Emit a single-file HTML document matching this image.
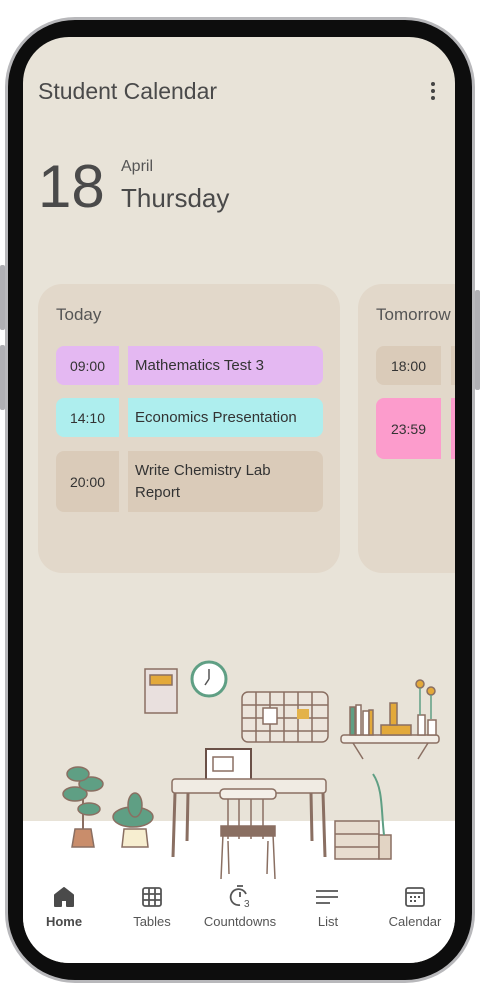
<!DOCTYPE html>
<html><head><meta charset="utf-8"><style>
*{margin:0;padding:0;box-sizing:border-box}
body{width:480px;height:1000px;background:#fff;position:relative;overflow:hidden;font-family:"Liberation Sans",Roboto,sans-serif;color:#444}
.frame{position:absolute;left:5px;top:17px;width:470px;height:966px;border-radius:70px;background:#b8b8bb;}
.bezel{position:absolute;left:8px;top:20px;width:464px;height:960px;border-radius:67px;background:#0d0d0d;}
.screen{position:absolute;left:23px;top:37px;width:432px;height:926px;border-radius:46px;background:#e8e3d8;overflow:hidden}
.btn{position:absolute;background:#b0b0b4;width:5px;border-radius:2px}
.t{position:absolute;white-space:nowrap}
.card{position:absolute;top:247px;height:289px;border-radius:24px;background:#e2d8ca}
.box{position:absolute;border-radius:0;font-size:14px;display:flex;align-items:center;color:#333}
.tm{justify-content:center;border-radius:8px 0 0 8px}
.ti{padding-left:7px;font-size:15px;border-radius:0 8px 8px 0;line-height:22px}
.nav{position:absolute;top:877px;font-size:13px;color:#555;text-align:center;width:80px}
</style></head><body>
<div class="btn" style="left:0;top:265px;height:65px"></div>
<div class="btn" style="left:0;top:345px;height:65px"></div>
<div class="btn" style="left:475px;top:290px;height:100px"></div>
<div class="frame"></div>
<div class="bezel"></div>
<div class="screen">
 <div class="t" style="left:15px;top:41px;font-size:23px;color:#4a4a4a">Student Calendar</div>
 <div class="t" style="left:408px;top:45px;width:4px"><div style="width:4px;height:4px;border-radius:2px;background:#444;margin-bottom:3px"></div><div style="width:4px;height:4px;border-radius:2px;background:#444;margin-bottom:3px"></div><div style="width:4px;height:4px;border-radius:2px;background:#444"></div></div>
 <div class="t" style="left:15px;top:115px;font-size:60px;color:#4a4a4a;line-height:70px">18</div>
 <div class="t" style="left:98px;top:121px;font-size:16px;color:#555">April</div>
 <div class="t" style="left:98px;top:146px;font-size:26px;color:#4a4a4a">Thursday</div>

 <div class="card" style="left:15px;width:302px">
  <div class="t" style="left:18px;top:21px;font-size:17px;color:#555">Today</div>
  <div class="box tm" style="left:18px;top:62px;width:63px;height:39px;background:#e4b8f2">09:00</div>
  <div class="box ti" style="left:90px;top:62px;width:195px;height:39px;background:#e4b8f2">Mathematics Test 3</div>
  <div class="box tm" style="left:18px;top:114px;width:63px;height:39px;background:#aeeeee">14:10</div>
  <div class="box ti" style="left:90px;top:114px;width:195px;height:39px;background:#aeeeee">Economics Presentation</div>
  <div class="box tm" style="left:18px;top:167px;width:63px;height:61px;background:#dacbb9">20:00</div>
  <div class="box ti" style="left:90px;top:167px;width:195px;height:61px;background:#dacbb9">Write Chemistry Lab<br>Report</div>
 </div>
 <div class="card" style="left:335px;width:200px">
  <div class="t" style="left:18px;top:21px;font-size:17px;color:#555">Tomorrow</div>
  <div class="box tm" style="left:18px;top:62px;width:65px;height:39px;background:#dacbb9">18:00</div>
  <div class="box ti" style="left:93px;top:62px;width:100px;height:39px;background:#dacbb9"></div>
  <div class="box tm" style="left:18px;top:114px;width:65px;height:61px;background:#fc9ccc">23:59</div>
  <div class="box ti" style="left:93px;top:114px;width:100px;height:61px;background:#fc9ccc"></div>
 </div>

 <div style="position:absolute;left:0;top:784px;width:432px;height:142px;background:#fff"></div>
 <svg style="position:absolute;left:0;top:592px" width="432" height="260" viewBox="0 0 432 260">
  <g stroke="#8a6f62" stroke-width="1.5" fill="none">
   <rect x="122" y="40" width="32" height="44" fill="#e9e0de"/>
   <rect x="127" y="46" width="22" height="10" fill="#e3a93a"/>
   <circle cx="186" cy="50" r="17" fill="#fff" stroke="#5f9f84" stroke-width="3"/>
   <path d="M186 50 L186 40 M186 50 L182 56" stroke="#555"/>
   <rect x="219" y="63" width="86" height="50" rx="6" fill="#ece5dc"/>
   <path d="M219 76h86M219 89h86M219 102h86M233 63v50M247 63v50M261 63v50M275 63v50M289 63v50"/>
   <rect x="240" y="79" width="14" height="16" fill="#fff"/>
   <rect x="274" y="80" width="12" height="10" fill="#e3b24a" stroke="none"/>
   <rect x="318" y="106" width="98" height="8" rx="3" fill="#f2ede6"/>
   <path d="M330 114 l10 16 M405 114 l-10 16"/>
   <rect x="327" y="78" width="5" height="28" fill="#5f9f84"/>
   <rect x="333" y="76" width="5" height="30" fill="#fff"/>
   <rect x="340" y="82" width="6" height="24" fill="#fff"/>
   <rect x="346" y="81" width="4" height="25" fill="#e3a93a"/>
   <rect x="358" y="96" width="30" height="10" fill="#e3a93a"/>
   <rect x="367" y="74" width="7" height="22" fill="#e3a93a"/>
   <rect x="395" y="86" width="7" height="20" fill="#fff"/>
   <rect x="405" y="91" width="8" height="15" fill="#fff"/>
   <circle cx="397" cy="55" r="4" fill="#e3a93a"/><circle cx="408" cy="62" r="4" fill="#e3a93a"/>
   <path d="M397 59 V86 M408 66 V90" stroke="#5f9f84"/>
   <rect x="183" y="120" width="45" height="33" fill="#fff" stroke="#6a5047" stroke-width="2"/>
   <rect x="190" y="128" width="20" height="14" fill="#fff"/>
   <path d="M170 155 h62"/>
   <rect x="149" y="150" width="154" height="14" rx="3" fill="#f0ebe3"/>
   <path d="M152 164 L150 228 M300 164 L302 228 M165 164 L164 212 M288 164 L289 212" stroke-width="3"/>
   <rect x="197" y="160" width="56" height="10" rx="4" fill="#f4efe8"/>
   <path d="M205 170 v40 M216 170 v40 M228 170 v40 M240 170 v40 M200 198 h50 M200 205 L198 250 M250 205 L252 250 M205 212 L206 245 M245 212 L244 245"/>
   <rect x="198" y="197" width="54" height="10" fill="#8a6f62"/>
   <rect x="312" y="192" width="44" height="38" fill="#e8ddd0"/>
   <path d="M312 205 h44 M312 218 h44"/>
   <rect x="356" y="206" width="12" height="24" fill="#e2d4c4"/>
   <path d="M361 206 C358 180 360 160 350 145" stroke="#5f9f84" stroke-width="2"/>
   <path d="M49 218 h22 l-3 -18 h-16 z" fill="#c98d6b"/>
   <path d="M60 200 V145" stroke-width="2"/>
   <ellipse cx="52" cy="165" rx="12" ry="7" fill="#5f9f84"/>
   <ellipse cx="68" cy="155" rx="12" ry="7" fill="#5f9f84"/>
   <ellipse cx="55" cy="145" rx="11" ry="7" fill="#5f9f84"/>
   <ellipse cx="66" cy="180" rx="11" ry="6" fill="#5f9f84"/>
   <path d="M99 218 h26 l-2 -18 h-22 z" fill="#f7eed0"/>
   <ellipse cx="110" cy="188" rx="20" ry="10" fill="#5f9f84"/>
   <ellipse cx="112" cy="176" rx="7" ry="12" fill="#5f9f84"/>
  </g>
 </svg>

 <svg style="position:absolute;left:30px;top:850px" width="22" height="20" viewBox="0 0 22 20"><path d="M2 8 L11 1 L20 8 V19 H14 V13 H8 V19 H2 Z" fill="#4a4a4a" stroke="#4a4a4a" stroke-linejoin="round" stroke-width="2"/></svg>
 <svg style="position:absolute;left:119px;top:850px" width="20" height="20" viewBox="0 0 20 20" fill="none" stroke="#555" stroke-width="1.8"><rect x="1" y="1" width="18" height="18" rx="2"/><path d="M7 1v18M13 1v18M1 7h18M1 13h18"/></svg>
 <svg style="position:absolute;left:206px;top:847px" width="24" height="24" viewBox="0 0 24 24" fill="none" stroke="#555" stroke-width="1.8"><path d="M8 2h6M11 8v5"/><path d="M17 10 A8 8 0 1 0 11 21"/><text x="15" y="23" font-size="10" fill="#555" stroke="none" font-family="Liberation Sans">3</text></svg>
 <svg style="position:absolute;left:293px;top:852px" width="22" height="16" viewBox="0 0 22 16" stroke="#555" stroke-width="1.8"><path d="M0 2h22M0 8h22M0 14h14"/></svg>
 <svg style="position:absolute;left:382px;top:850px" width="20" height="20" viewBox="0 0 20 20" fill="none" stroke="#555" stroke-width="1.8"><rect x="1" y="1" width="18" height="18" rx="2"/><path d="M1 6h18"/><g fill="#555" stroke="none"><rect x="5" y="9" width="2" height="2"/><rect x="9" y="9" width="2" height="2"/><rect x="13" y="9" width="2" height="2"/><rect x="5" y="13" width="2" height="2"/><rect x="9" y="13" width="2" height="2"/></g></svg>
 <div class="nav" style="left:1px;font-weight:bold;color:#4a4a4a">Home</div>
 <div class="nav" style="left:89px">Tables</div>
 <div class="nav" style="left:177px;width:80px">Countdowns</div>
 <div class="nav" style="left:265px">List</div>
 <div class="nav" style="left:352px">Calendar</div>
</div>
</body></html>
